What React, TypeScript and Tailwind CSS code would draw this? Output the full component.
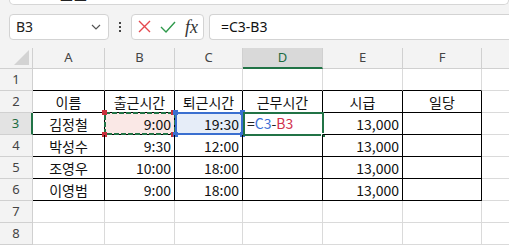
import React from 'react';

const ui = { fontFamily: '"Noto Sans", "Open Sans", sans-serif' };
const cellFont = { fontFamily: '"Noto Sans CJK KR", "Noto Sans", sans-serif' };

const colW = ['w-[72px]', 'w-[70px]', 'w-[68px]', 'w-[80px]', 'w-[80px]', 'w-[79px]'];
const letters = ['A', 'B', 'C', 'D', 'E', 'F'];

type Cell = { v?: string; align?: 'c' | 'r' | 'l' };

const rows: Cell[][] = [
  [],
  [{ v: '이름', align: 'c' }, { v: '출근시간', align: 'c' }, { v: '퇴근시간', align: 'c' }, { v: '근무시간', align: 'c' }, { v: '시급', align: 'c' }, { v: '일당', align: 'c' }],
  [{ v: '김정철', align: 'c' }, { v: '9:00', align: 'r' }, { v: '19:30', align: 'r' }, {}, { v: '13,000', align: 'r' }, {}],
  [{ v: '박성수', align: 'c' }, { v: '9:30', align: 'r' }, { v: '12:00', align: 'r' }, {}, { v: '13,000', align: 'r' }, {}],
  [{ v: '조영우', align: 'c' }, { v: '10:00', align: 'r' }, { v: '18:00', align: 'r' }, {}, { v: '13,000', align: 'r' }, {}],
  [{ v: '이영범', align: 'c' }, { v: '9:00', align: 'r' }, { v: '18:00', align: 'r' }, {}, { v: '13,000', align: 'r' }, {}],
  [],
  [],
];

const Handle = ({ className }: { className: string }) => (
  <div className={`absolute w-[5px] h-[5px] ${className}`} />
);

function CellBox({ r, c, cell }: { r: number; c: number; cell: Cell }) {
  const inTable = r >= 1 && r <= 5;
  const topEdge = r === 0;
  const border = inTable
    ? 'border-r border-b border-black'
    : topEdge
      ? 'border-r border-b border-r-[#dadada] border-b-black'
      : 'border-r border-b border-[#dadada]';
  const align = cell.align === 'c' ? 'justify-center' : cell.align === 'r' ? 'justify-end pr-[3px]' : 'justify-start pl-[3px]';

  let bg = '';
  if (r === 2 && c === 1) bg = 'bg-[#fae8e6]';
  if (r === 2 && c === 2) bg = 'bg-[#e6edf8]';

  return (
    <div className={`relative shrink-0 h-[22px] ${colW[c]} ${border} ${bg} flex items-center ${align} text-[14px] text-[#111]`} style={cellFont}>
      {cell.v && <span className="leading-none">{cell.v}</span>}
      {r === 2 && c === 1 && (
        <>
          <svg className="absolute left-[-1px] top-[-1px]" width="72" height="23">
            <rect x="1" y="1" width="70" height="21" fill="none" stroke="#217346" strokeWidth="2" strokeDasharray="5 2" />
          </svg>
          <Handle className="left-[-3px] top-[-3px] bg-[#c8303c]" />
          <Handle className="right-[-2px] top-[-3px] bg-[#c8303c]" />
          <Handle className="left-[-3px] bottom-[-3px] bg-[#c8303c]" />
          <Handle className="right-[-2px] bottom-[-3px] bg-[#c8303c]" />
        </>
      )}
      {r === 2 && c === 2 && (
        <>
          <div className="absolute left-0 right-[-1px] top-[-1px] bottom-[-1px] border-2 border-[#3a6fd0]" />
          <Handle className="left-[-2px] top-[-3px] bg-[#3a6fd0]" />
          <Handle className="right-[-3px] top-[-3px] bg-[#3a6fd0]" />
          <Handle className="left-[-2px] bottom-[-3px] bg-[#3a6fd0]" />
          <Handle className="right-[-3px] bottom-[-3px] bg-[#3a6fd0]" />
        </>
      )}
      {r === 2 && c === 3 && (
        <>
          <div className="absolute left-0 right-[-2px] top-[-1px] bottom-[-2px] border-2 border-[#217346]" />
          <div className="absolute right-[-4px] bottom-[-4px] w-[5px] h-[5px] bg-[#217346] border border-white" />
          <span className="absolute left-[4px] top-[3px] leading-none text-[14px]">
            <span className="text-[#222]">=</span>
            <span className="text-[#3b6fd6]">C3</span>
            <span className="text-[#222]">-</span>
            <span className="text-[#d0304c]">B3</span>
          </span>
        </>
      )}
    </div>
  );
}

export default function App() {
  return (
    <div className="w-[509px] h-[245px] overflow-hidden bg-[#f3f3f3] flex flex-col" style={ui}>
      {/* ribbon leftover */}
      <div className="ml-[9px] h-[5px] bg-white border border-t-0 border-[#d6d6d6] rounded-b-[5px] overflow-hidden relative">
        <span className="absolute left-[50px] top-[-10px] text-[14px] text-[#222] leading-none tracking-[1px]" style={cellFont}>ㅗㅗ</span>
      </div>

      {/* formula bar */}
      <div className="mt-[9px] h-[27px] flex items-stretch">
        <div className="ml-[9px] w-[100px] bg-white border border-[#d3d3d3] rounded-[4px] flex items-center justify-between pl-[6px] pr-[7px]">
          <span className="text-[14px] text-[#222]">B3</span>
          <svg width="10" height="6" viewBox="0 0 10 6" fill="none" stroke="#555" strokeWidth="1.2">
            <path d="M1 1l4 4 4-4" />
          </svg>
        </div>
        <div className="w-[22px] flex flex-col items-center justify-center gap-[2px]">
          <div className="w-[2px] h-[2px] bg-[#444]" />
          <div className="w-[2px] h-[2px] bg-[#444]" />
          <div className="w-[2px] h-[2px] bg-[#444]" />
        </div>
        <div className="w-[73px] bg-white border border-[#d3d3d3] rounded-[4px] flex items-center pl-[6px] gap-[9px]">
          <svg width="13" height="13" viewBox="0 0 13 13" stroke="#e5484d" strokeWidth="1.4">
            <path d="M1 1l11 11M12 1L1 12" />
          </svg>
          <svg width="16" height="12" viewBox="0 0 16 12" fill="none" stroke="#2f9a4c" strokeWidth="1.4">
            <path d="M1 6l5 5L15 1" />
          </svg>
          <span className="text-[18px] italic text-[#333] leading-none" style={{ fontFamily: '"Liberation Serif", serif' }}>fx</span>
        </div>
        <div className="ml-[5px] flex-1 bg-white border border-r-0 border-[#d3d3d3] rounded-l-[4px] flex items-center pl-[11px]">
          <span className="text-[14px] text-[#111]">=C3-B3</span>
        </div>
      </div>

      {/* sheet */}
      <div className="mt-[8px] flex flex-col">
        <div className="h-[21px] flex text-[13px] text-[#444]">
          <div className="w-[33px] shrink-0 border-r border-b border-[#d0d0d0] flex items-end justify-end pr-[3px] pb-[3px]">
            <svg width="15" height="15" viewBox="0 0 15 15">
              <path d="M15 0V15H0Z" fill="#d3d3d3" />
            </svg>
          </div>
          {letters.map((l, i) => (
            <div
              key={l}
              className={`shrink-0 ${colW[i]} flex items-center justify-center border-r ${
                i === 3 ? 'bg-[#d9d9d9] border-b-2 border-b-[#217346] border-r-[#d0d0d0] text-[#1e6b41]' : 'border-b border-[#d0d0d0]'
              }`}
            >
              {l}
            </div>
          ))}
          <div className="flex-1 border-b border-[#d0d0d0]" />
        </div>
        {rows.map((row, r) => (
          <div key={r} className="flex bg-white">
            <div
              className={`w-[33px] shrink-0 h-[22px] flex items-center justify-center text-[13px] border-b border-[#d0d0d0] ${
                r === 2 ? 'bg-[#e3e3e3] text-[#1e6b41] border-r-2 border-r-[#217346]' : 'bg-[#f3f3f3] text-[#444] border-r'
              }`}
            >
              {r + 1}
            </div>
            {letters.map((_, c) => (
              <CellBox key={c} r={r} c={c} cell={row[c] || {}} />
            ))}
            <div className="flex-1 h-[22px] border-b border-[#dadada]" />
          </div>
        ))}
      </div>
    </div>
  );
}
